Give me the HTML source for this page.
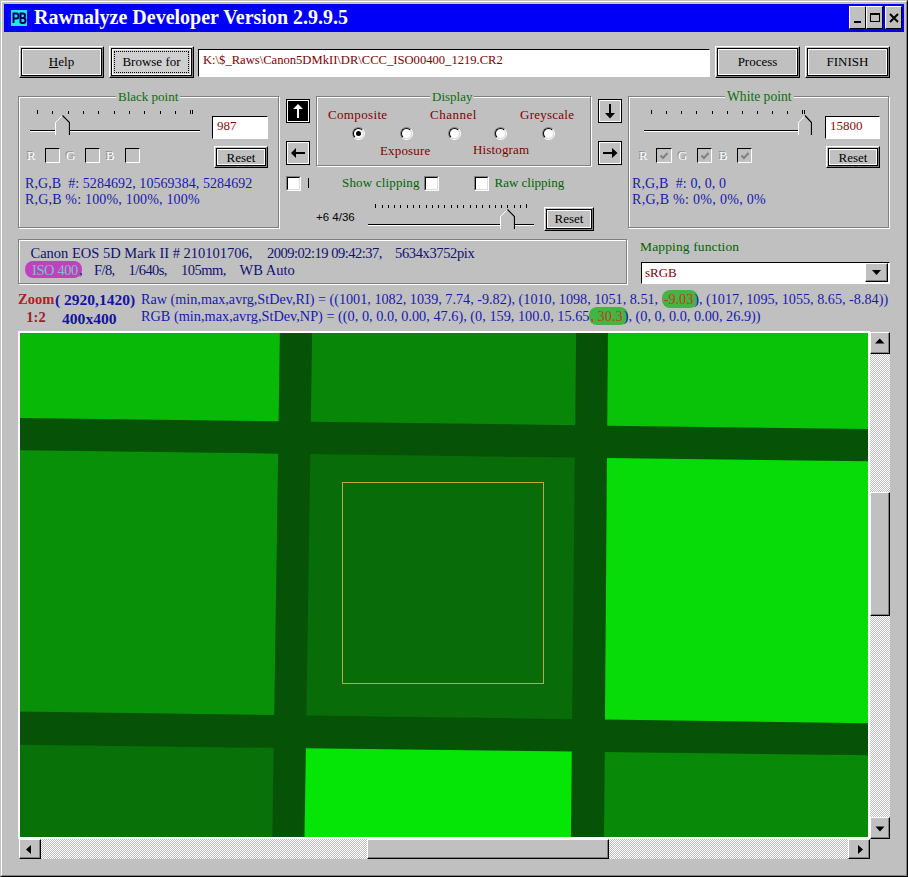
<!DOCTYPE html>
<html><head><meta charset="utf-8">
<style>
*{margin:0;padding:0;box-sizing:border-box}
html,body{width:908px;height:877px;overflow:hidden;background:#c0c0c0}
body{position:relative;font-family:"Liberation Serif",serif;font-size:13px;color:#000}
.a{position:absolute}
.t{position:absolute;white-space:pre;line-height:1}
.cbtn{position:absolute;top:6px;height:23px;width:17px;background:#c0c0c0;border-top:1px solid #fff;border-left:1px solid #fff;border-right:1px solid #000;border-bottom:1px solid #000}
.btn{position:absolute;background:#c0c0c0;border-top:1px solid #fff;border-left:1px solid #fff;border-right:1px solid #000;border-bottom:1px solid #000}
.btn>.i1{position:absolute;left:0;top:0;right:0;bottom:0;border-right:1px solid #808080;border-bottom:1px solid #808080}
.btn>.i2{position:absolute;left:1px;top:1px;right:1px;bottom:1px;border:1px solid #000}
.btn>.i3{position:absolute;left:2px;top:2px;right:2px;bottom:2px;border:1px solid #fff}
.btn .lbl{position:absolute;left:0;right:0;text-align:center;white-space:pre;line-height:1}
.glbl{position:absolute;background:#c0c0c0;color:#0a6e0a;white-space:pre;line-height:1;padding:0 2px}
.chk{position:absolute;border-top:1px solid #808080;border-left:1px solid #808080;border-right:1px solid #fff;border-bottom:1px solid #fff}
.chk>div{position:absolute;left:0;top:0;right:0;bottom:0;border-top:1px solid #000;border-left:1px solid #000;border-right:1px solid #dcdcdc;border-bottom:1px solid #dcdcdc}
.radio{position:absolute;width:13px;height:13px;border-radius:50%;border:1px solid;border-color:#808080 #fff #fff #808080}
.radio>div{position:absolute;left:0;top:0;right:0;bottom:0;border-radius:50%;border:1px solid;border-color:#000 #dcdcdc #dcdcdc #000;background:#fff}
.tick{position:absolute;width:1px;background:#000}
.sb{position:absolute;background:#c0c0c0;border-top:1px solid #fff;border-left:1px solid #fff;border-right:1px solid #000;border-bottom:1px solid #000}
.sb>div{position:absolute;left:0;top:0;right:0;bottom:0;border-right:1px solid #808080;border-bottom:1px solid #808080}
.track{position:absolute;background-color:#e0e0e0;background-image:repeating-conic-gradient(#c0c0c0 0% 25%,#ffffff 0% 50%);background-size:2px 2px}
.nav{position:absolute;width:24px;height:24px;border:1px solid #000}
.nav>div{position:absolute;left:0;top:0;right:0;bottom:0;border:1px solid #fff}
</style></head><body>

<div class="a" style="left:0px;top:0px;width:908px;height:877px;border-top:1px solid #c0c0c0;border-left:1px solid #c0c0c0;border-right:1px solid #000;border-bottom:1px solid #000"></div>
<div class="a" style="left:1px;top:1px;width:906px;height:875px;border-top:1px solid #fff;border-left:1px solid #fff;border-right:1px solid #808080;border-bottom:1px solid #808080"></div>
<div class="a" style="left:4px;top:4px;width:900px;height:28px;background:#0000f8"></div>
<div class="a" style="left:11px;top:10px;width:16px;height:16px;background:#22e4f4"></div>
<svg class="a" style="left:11px;top:10px" width="16" height="16"><path d="M2.5 13V3.5H5.5Q7.5 3.5 7.5 6Q7.5 8.5 5.5 8.5H2.5" stroke="#000050" stroke-width="2" fill="none"/><path d="M9.5 13V3.5H12Q14 3.5 14 5.5Q14 8 12 8H9.5M12 8Q14.5 8 14.5 10.5Q14.5 13 12 13H9.5" stroke="#000050" stroke-width="2" fill="none"/></svg>
<div class="t" style="left:34px;top:6.75px;font-size:20px;color:#fff;font-weight:bold;">Rawnalyze Developer Version 2.9.9.5</div>
<div class="cbtn" style="left:849px"><div class="a" style="left:4px;top:14px;width:7px;height:2px;background:#000"></div></div>
<div class="cbtn" style="left:866px"><div class="a" style="left:3px;top:6px;width:10px;height:9px;border:1px solid #000;border-top-width:2px"></div></div>
<div class="cbtn" style="left:885px"><svg class="a" style="left:3px;top:6px" width="10" height="10"><path d="M1 1L9 9M9 1L1 9" stroke="#000" stroke-width="2"/></svg></div>
<div class="btn" style="left:19px;top:46px;width:85px;height:32px;"><div class="i1"></div><div class="i2"></div><div class="i3"></div>
<div class="lbl" style="top:7.91px;font-size:13px"><u>H</u>elp</div></div>
<div class="btn" style="left:109px;top:46px;width:85px;height:32px;background-color:#cfcfcf;"><div class="i1"></div><div class="i2"></div><div class="i3"></div>
<div class="a" style="left:4px;top:4px;right:4px;bottom:4px;border:1px dotted #000"></div>
<div class="lbl" style="top:7.91px;font-size:13px">Browse for</div></div>
<div class="a" style="left:198px;top:49px;width:512px;height:28px;background:#fff;border-top:1px solid #000;border-left:1px solid #000;border-right:1px solid #fff;border-bottom:1px solid #fff"></div>
<div class="t" style="left:203px;top:54.25px;font-size:12.6px;color:#800000;">K:\$_Raws\Canon5DMkII\DR\CCC_ISO00400_1219.CR2</div>
<div class="btn" style="left:715px;top:46px;width:85px;height:32px;"><div class="i1"></div><div class="i2"></div><div class="i3"></div>
<div class="lbl" style="top:7.91px;font-size:13px">Process</div></div>
<div class="btn" style="left:805px;top:46px;width:85px;height:32px;"><div class="i1"></div><div class="i2"></div><div class="i3"></div>
<div class="lbl" style="top:7.91px;font-size:13px">FINISH</div></div>
<div class="a" style="left:19px;top:97px;width:261px;height:132px;border:1px solid #fff"></div>
<div class="a" style="left:18px;top:96px;width:261px;height:132px;border:1px solid #808080;border-right-color:#808080"></div>
<div class="glbl" style="left:116px;top:89.5px;font-size:13px">Black point</div>
<div class="a" style="left:317px;top:97px;width:275px;height:70px;border:1px solid #fff"></div>
<div class="a" style="left:316px;top:96px;width:275px;height:70px;border:1px solid #808080;border-right-color:#808080"></div>
<div class="glbl" style="left:430px;top:89.5px;font-size:13px">Display</div>
<div class="a" style="left:629px;top:97px;width:261px;height:132px;border:1px solid #fff"></div>
<div class="a" style="left:628px;top:96px;width:261px;height:132px;border:1px solid #808080;border-right-color:#808080"></div>
<div class="glbl" style="left:725px;top:89.5px;font-size:13.6px">White point</div>
<div class="tick" style="left:37px;top:111px;height:3px"></div>
<div class="tick" style="left:52px;top:111px;height:3px"></div>
<div class="tick" style="left:68px;top:111px;height:3px"></div>
<div class="tick" style="left:83px;top:111px;height:3px"></div>
<div class="tick" style="left:98px;top:111px;height:3px"></div>
<div class="tick" style="left:114px;top:111px;height:3px"></div>
<div class="tick" style="left:129px;top:111px;height:3px"></div>
<div class="tick" style="left:144px;top:111px;height:3px"></div>
<div class="tick" style="left:160px;top:111px;height:3px"></div>
<div class="tick" style="left:175px;top:111px;height:3px"></div>
<div class="tick" style="left:37px;top:110px;height:4px"></div>
<div class="tick" style="left:190px;top:110px;height:4px"></div>
<div class="tick" style="left:192px;top:110px;height:4px"></div>
<div class="a" style="left:30px;top:130px;width:170px;height:1px;background:#000"></div>
<div class="a" style="left:30px;top:131px;width:170px;height:1px;background:#fff"></div>
<svg class="a" style="left:55px;top:115px" width="15" height="20"><path d="M0.5 20 L0.5 7.5 L7.5 0.5 L7.5 0.5" stroke="none" fill="#c0c0c0"/><polygon points="0,20 0,7 7.5,0 15,7 15,20" fill="#c0c0c0"/><path d="M0.5 20 L0.5 7.5 L7.5 0.5" stroke="#fff" fill="none" stroke-width="1"/><path d="M7.5 0.5 L14.5 7.5 L14.5 20" stroke="#000" fill="none" stroke-width="1.2"/></svg>
<div class="a" style="left:212px;top:116px;width:56px;height:23px;background:#fff;border-top:1px solid #000;border-left:1px solid #000;border-right:1px solid #fff;border-bottom:1px solid #fff"></div>
<div class="t" style="left:217px;top:119.11px;font-size:13px;color:#8a0a0a;">987</div>
<div class="btn" style="left:214px;top:146px;width:54px;height:22px;"><div class="i1"></div><div class="i2"></div><div class="i3"></div>
<div class="lbl" style="top:4.11px;font-size:13px">Reset</div></div>
<div class="t" style="left:27px;top:149.11px;font-size:13px;color:#fff;text-shadow:-1px -1px 0 #8a8a8a">R</div>
<div class="a" style="left:45px;top:148px;width:15px;height:15px;border-top:1px solid #000;border-left:1px solid #000;border-right:1px solid #fff;border-bottom:1px solid #fff;background:#c0c0c0"></div>
<div class="t" style="left:66px;top:149.11px;font-size:13px;color:#fff;text-shadow:-1px -1px 0 #8a8a8a">G</div>
<div class="a" style="left:85px;top:148px;width:15px;height:15px;border-top:1px solid #000;border-left:1px solid #000;border-right:1px solid #fff;border-bottom:1px solid #fff;background:#c0c0c0"></div>
<div class="t" style="left:106px;top:149.11px;font-size:13px;color:#fff;text-shadow:-1px -1px 0 #8a8a8a">B</div>
<div class="a" style="left:125px;top:148px;width:15px;height:15px;border-top:1px solid #000;border-left:1px solid #000;border-right:1px solid #fff;border-bottom:1px solid #fff;background:#c0c0c0"></div>
<div class="t" style="left:25px;top:177.28px;font-size:14px;color:#1818b0;letter-spacing:0.06px">R,G,B  #: 5284692, 10569384, 5284692</div>
<div class="t" style="left:25px;top:193.28px;font-size:14px;color:#1818b0;letter-spacing:0.18px">R,G,B %: 100%, 100%, 100%</div>
<div class="tick" style="left:651px;top:111px;height:3px"></div>
<div class="tick" style="left:666px;top:111px;height:3px"></div>
<div class="tick" style="left:681px;top:111px;height:3px"></div>
<div class="tick" style="left:696px;top:111px;height:3px"></div>
<div class="tick" style="left:712px;top:111px;height:3px"></div>
<div class="tick" style="left:727px;top:111px;height:3px"></div>
<div class="tick" style="left:742px;top:111px;height:3px"></div>
<div class="tick" style="left:757px;top:111px;height:3px"></div>
<div class="tick" style="left:772px;top:111px;height:3px"></div>
<div class="tick" style="left:787px;top:111px;height:3px"></div>
<div class="tick" style="left:651px;top:110px;height:4px"></div>
<div class="tick" style="left:802px;top:110px;height:4px"></div>
<div class="tick" style="left:804px;top:110px;height:4px"></div>
<div class="a" style="left:644px;top:130px;width:155px;height:1px;background:#000"></div>
<div class="a" style="left:644px;top:131px;width:155px;height:1px;background:#fff"></div>
<svg class="a" style="left:798px;top:115px" width="14" height="20"><path d="M0.5 20 L0.5 7.5 L7.0 0.5 L7.0 0.5" stroke="none" fill="#c0c0c0"/><polygon points="0,20 0,7 7.0,0 14,7 14,20" fill="#c0c0c0"/><path d="M0.5 20 L0.5 7.5 L7.0 0.5" stroke="#fff" fill="none" stroke-width="1"/><path d="M7.0 0.5 L13.5 7.5 L13.5 20" stroke="#000" fill="none" stroke-width="1.2"/></svg>
<div class="a" style="left:825px;top:116px;width:55px;height:23px;background:#fff;border-top:1px solid #000;border-left:1px solid #000;border-right:1px solid #fff;border-bottom:1px solid #fff"></div>
<div class="t" style="left:830px;top:119.11px;font-size:13px;color:#8a0a0a;">15800</div>
<div class="btn" style="left:826px;top:146px;width:54px;height:22px;"><div class="i1"></div><div class="i2"></div><div class="i3"></div>
<div class="lbl" style="top:4.11px;font-size:13px">Reset</div></div>
<div class="t" style="left:639px;top:149.11px;font-size:13px;color:#fff;text-shadow:-1px -1px 0 #8a8a8a">R</div>
<div class="a" style="left:656px;top:148px;width:16px;height:15px;border-top:1px solid #000;border-left:1px solid #000;border-right:1px solid #fff;border-bottom:1px solid #fff;background:#c0c0c0"></div>
<svg class="a" style="left:659px;top:151px" width="10" height="10"><path d="M1.5 4.5 L4 7 L8.5 2" stroke="#808080" stroke-width="2" fill="none"/></svg>
<div class="t" style="left:678px;top:149.11px;font-size:13px;color:#fff;text-shadow:-1px -1px 0 #8a8a8a">G</div>
<div class="a" style="left:697px;top:148px;width:15px;height:15px;border-top:1px solid #000;border-left:1px solid #000;border-right:1px solid #fff;border-bottom:1px solid #fff;background:#c0c0c0"></div>
<svg class="a" style="left:700px;top:151px" width="10" height="10"><path d="M1.5 4.5 L4 7 L8.5 2" stroke="#808080" stroke-width="2" fill="none"/></svg>
<div class="t" style="left:719px;top:149.11px;font-size:13px;color:#fff;text-shadow:-1px -1px 0 #8a8a8a">B</div>
<div class="a" style="left:737px;top:148px;width:15px;height:15px;border-top:1px solid #000;border-left:1px solid #000;border-right:1px solid #fff;border-bottom:1px solid #fff;background:#c0c0c0"></div>
<svg class="a" style="left:740px;top:151px" width="10" height="10"><path d="M1.5 4.5 L4 7 L8.5 2" stroke="#808080" stroke-width="2" fill="none"/></svg>
<div class="t" style="left:632px;top:177.28px;font-size:14px;color:#1818b0;letter-spacing:0.12px">R,G,B  #: 0, 0, 0</div>
<div class="t" style="left:632px;top:193.28px;font-size:14px;color:#1818b0;letter-spacing:0.3px">R,G,B %: 0%, 0%, 0%</div>
<div class="nav" style="left:286px;top:99px;background:#000"><div></div><svg class="a" style="left:1px;top:1px" width="22" height="22"><path d="M9 17V8H5L10 3L15 8H11V17Z" fill="#fff"/></svg></div>
<div class="nav" style="left:286px;top:141px;background:#c0c0c0"><div></div><svg class="a" style="left:1px;top:1px" width="22" height="22"><path d="M3 10L8 5V9H17V11H8V15Z" fill="#000"/></svg></div>
<div class="nav" style="left:598px;top:99px;background:#c0c0c0"><div></div><svg class="a" style="left:1px;top:1px" width="22" height="22"><path d="M9 3H11V12H15L10 17.5L5 12H9Z" fill="#000"/></svg></div>
<div class="nav" style="left:598px;top:141px;background:#c0c0c0"><div></div><svg class="a" style="left:1px;top:1px" width="22" height="22"><path d="M17.5 10L12 5V9H3V11H12V15Z" fill="#000"/></svg></div>
<div class="t" style="left:328px;top:107.51px;font-size:13px;color:#800000;letter-spacing:0.35px">Composite</div>
<div class="t" style="left:430px;top:108.11px;font-size:13px;color:#800000;letter-spacing:0.5px">Channel</div>
<div class="t" style="left:520px;top:108.11px;font-size:13px;color:#800000;letter-spacing:0.25px">Greyscale</div>
<div class="radio" style="left:352px;top:127px"><div></div></div>
<div class="a" style="left:356px;top:131px;width:5px;height:5px;border-radius:50%;background:#000"></div>
<div class="radio" style="left:400px;top:127px"><div></div></div>
<div class="radio" style="left:448px;top:127px"><div></div></div>
<div class="radio" style="left:494px;top:127px"><div></div></div>
<div class="radio" style="left:542px;top:127px"><div></div></div>
<div class="t" style="left:380px;top:144.11px;font-size:13px;color:#800000;letter-spacing:0.15px">Exposure</div>
<div class="t" style="left:473px;top:142.61px;font-size:13px;color:#800000;letter-spacing:0.15px">Histogram</div>
<div class="chk" style="left:286px;top:176px;width:15px;height:15px"><div style="background:#fff"></div></div>
<div class="a" style="left:308px;top:178px;width:1px;height:10px;background:#000"></div>
<div class="t" style="left:342px;top:176.11px;font-size:13px;color:#006400;letter-spacing:0.17px">Show clipping</div>
<div class="chk" style="left:424px;top:176px;width:15px;height:15px"><div style="background:#fff"></div></div>
<div class="chk" style="left:474px;top:176px;width:15px;height:15px"><div style="background:#fff"></div></div>
<div class="t" style="left:494.5px;top:176.11px;font-size:13px;color:#006400;">Raw clipping</div>
<div class="t" style="left:316px;top:212.27px;font-size:11.5px;color:#000;font-family:'Liberation Sans',sans-serif;">+6 4/36</div>
<div class="tick" style="left:382px;top:205px;height:3px"></div>
<div class="tick" style="left:388px;top:205px;height:3px"></div>
<div class="tick" style="left:394px;top:205px;height:3px"></div>
<div class="tick" style="left:400px;top:205px;height:3px"></div>
<div class="tick" style="left:407px;top:205px;height:3px"></div>
<div class="tick" style="left:413px;top:205px;height:3px"></div>
<div class="tick" style="left:419px;top:205px;height:3px"></div>
<div class="tick" style="left:426px;top:205px;height:3px"></div>
<div class="tick" style="left:432px;top:205px;height:3px"></div>
<div class="tick" style="left:438px;top:205px;height:3px"></div>
<div class="tick" style="left:444px;top:205px;height:3px"></div>
<div class="tick" style="left:451px;top:205px;height:3px"></div>
<div class="tick" style="left:457px;top:205px;height:3px"></div>
<div class="tick" style="left:463px;top:205px;height:3px"></div>
<div class="tick" style="left:470px;top:205px;height:3px"></div>
<div class="tick" style="left:476px;top:205px;height:3px"></div>
<div class="tick" style="left:482px;top:205px;height:3px"></div>
<div class="tick" style="left:489px;top:205px;height:3px"></div>
<div class="tick" style="left:495px;top:205px;height:3px"></div>
<div class="tick" style="left:501px;top:205px;height:3px"></div>
<div class="tick" style="left:507px;top:205px;height:3px"></div>
<div class="tick" style="left:514px;top:205px;height:3px"></div>
<div class="tick" style="left:520px;top:205px;height:3px"></div>
<div class="tick" style="left:375px;top:204px;height:4px"></div>
<div class="tick" style="left:526px;top:204px;height:4px"></div>
<div class="a" style="left:368px;top:224px;width:166px;height:1px;background:#000"></div>
<div class="a" style="left:368px;top:225px;width:166px;height:1px;background:#fff"></div>
<svg class="a" style="left:500px;top:209px" width="15" height="20"><path d="M0.5 20 L0.5 7.5 L7.5 0.5 L7.5 0.5" stroke="none" fill="#c0c0c0"/><polygon points="0,20 0,7 7.5,0 15,7 15,20" fill="#c0c0c0"/><path d="M0.5 20 L0.5 7.5 L7.5 0.5" stroke="#fff" fill="none" stroke-width="1"/><path d="M7.5 0.5 L14.5 7.5 L14.5 20" stroke="#000" fill="none" stroke-width="1.2"/></svg>
<div class="btn" style="left:544px;top:207px;width:50px;height:24px;"><div class="i1"></div><div class="i2"></div><div class="i3"></div>
<div class="lbl" style="top:4.41px;font-size:13px">Reset</div></div>
<div class="a" style="left:19px;top:240px;width:609px;height:45px;border:1px solid #fff"></div>
<div class="a" style="left:18px;top:239px;width:609px;height:45px;border:1px solid #808080;border-right-color:#808080"></div>
<div class="t" style="left:30.5px;top:246.36px;font-size:14.5px;color:#101070;">Canon EOS 5D Mark II # 210101706,</div>
<div class="t" style="left:267px;top:246.36px;font-size:14.5px;color:#101070;letter-spacing:-0.5px">2009:02:19 09:42:37,</div>
<div class="t" style="left:395px;top:246.36px;font-size:14.5px;color:#101070;letter-spacing:-0.37px">5634x3752pix</div>
<div class="a" style="left:25px;top:261px;width:57px;height:17px;background:#c040c0;border-radius:8px"></div>
<div class="t" style="left:32px;top:262.86px;font-size:14.5px;color:#78c4c4;letter-spacing:-0.4px">ISO 400</div>
<div class="t" style="left:79px;top:262.86px;font-size:14.5px;color:#101070;">,</div>
<div class="t" style="left:94px;top:262.86px;font-size:14.5px;color:#101070;letter-spacing:-0.6px">F/8,</div>
<div class="t" style="left:128.5px;top:262.86px;font-size:14.5px;color:#101070;letter-spacing:-0.55px">1/640s,</div>
<div class="t" style="left:181px;top:262.86px;font-size:14.5px;color:#101070;letter-spacing:-0.5px">105mm,</div>
<div class="t" style="left:239.5px;top:262.86px;font-size:14.5px;color:#101070;">WB Auto</div>
<div class="t" style="left:640px;top:239.69px;font-size:13.5px;color:#006400;letter-spacing:0.13px">Mapping function</div>
<div class="a" style="left:641px;top:262px;width:249px;height:22px;background:#fff;border-top:1px solid #000;border-left:1px solid #000;border-right:1px solid #fff;border-bottom:1px solid #fff"></div>
<div class="t" style="left:645px;top:266.11px;font-size:13px;color:#800000;">sRGB</div>
<div class="sb" style="left:865px;top:263px;width:23px;height:19px"><div></div><svg class="a" style="left:6px;top:6px" width="10" height="6"><path d="M0 0H9L4.5 5Z" fill="#000"/></svg></div>
<div class="t" style="left:18px;top:292.36px;font-size:14.5px;color:#b02020;font-weight:bold;">Zoom</div>
<div class="t" style="left:55px;top:292.32px;font-size:15.5px;color:#1414a0;font-weight:bold;">( 2920,1420)</div>
<div class="t" style="left:26.3px;top:309.86px;font-size:14.5px;color:#a02020;font-weight:bold;">1:2</div>
<div class="t" style="left:62px;top:311.13px;font-size:15.6px;color:#1414a0;font-weight:bold;">400x400</div>
<div class="t" style="left:141px;top:291.71px;font-size:14.2px;color:#1818b0;">Raw (min,max,avrg,StDev,RI) = ((1001, 1082, 1039, 7.74, -9.82), (1010, 1098, 1051, 8.51, <span style="background:#44b444;border-radius:8px;color:#c04020;padding:1px 5px 1px 2px;margin-right:-4px">-9.03</span>), (1017, 1095, 1055, 8.65, -8.84))</div>
<div class="t" style="left:141px;top:309.22px;font-size:14.3px;color:#1818b0;">RGB (min,max,avrg,StDev,NP) = ((0, 0, 0.0, 0.00, 47.6), (0, 159, 100.0, 15.65<span style="background:#44b444;border-radius:8px;color:#c04020;padding:1px 5px 1px 1px;margin-right:-4px">, 30.3</span>), (0, 0, 0.0, 0.00, 26.9))</div>
<div class="a" style="left:18px;top:331px;width:852px;height:508px;background:#fff"></div>
<div class="a" style="left:20px;top:333px;width:848px;height:504px;overflow:hidden"><svg class="a" style="left:-20px;top:-333px" width="908" height="877">
<rect x="20" y="333" width="848" height="504" fill="rgb(6,82,6)"/>
<polygon points="15.00,328.00 279.98,328.00 278.58,421.36 15.00,417.94" fill="rgb(8,185,8)"/>
<polygon points="312.18,328.00 576.22,328.00 575.21,425.22 310.77,421.78" fill="rgb(8,134,8)"/>
<polygon points="607.99,328.00 873.00,328.00 873.00,429.09 607.24,425.63" fill="rgb(8,195,8)"/>
<polygon points="15.00,450.24 278.10,453.66 274.18,714.96 15.00,711.33" fill="rgb(8,145,8)"/>
<polygon points="310.29,454.07 574.88,457.51 572.16,719.13 306.37,715.41" fill="rgb(8,108,8)"/>
<polygon points="606.99,457.93 873.00,461.39 873.00,723.34 604.98,719.59" fill="rgb(8,220,8)"/>
<polygon points="15.00,744.64 273.68,747.87 272.27,842.00 15.00,842.00" fill="rgb(8,114,8)"/>
<polygon points="305.88,748.27 571.82,751.60 570.88,842.00 304.47,842.00" fill="rgb(6,230,6)"/>
<polygon points="604.73,752.01 873.00,755.36 873.00,842.00 604.03,842.00" fill="rgb(8,138,8)"/>
</svg></div>
<div class="a" style="left:18px;top:331px;width:852px;height:2px;background:#fff"></div>
<div class="a" style="left:18px;top:331px;width:2px;height:508px;background:#fff"></div>
<div class="a" style="left:868px;top:331px;width:2px;height:508px;background:#fff"></div>
<div class="a" style="left:18px;top:837px;width:852px;height:2px;background:#fff"></div>
<div class="a" style="left:342px;top:482px;width:202px;height:202px;border:1px solid #d0a040"></div>
<div class="track" style="left:870px;top:332px;width:20px;height:507px"></div>
<div class="track" style="left:19px;top:839px;width:851px;height:20px"></div>
<div class="sb" style="left:870px;top:332px;width:20px;height:22px"><div></div><svg class="a" style="left:0;top:0" width="20" height="22"><path d="M4 10.5H13.5L8.75 5.5Z" fill="#000"/></svg></div>
<div class="sb" style="left:870px;top:817px;width:20px;height:22px"><div></div><svg class="a" style="left:0;top:0" width="20" height="22"><path d="M4.5 8.5H13.5L9 13.5Z" fill="#000"/></svg></div>
<div class="sb" style="left:870px;top:492px;width:20px;height:124px"><div></div></div>
<div class="sb" style="left:19px;top:839px;width:22px;height:20px"><div></div><svg class="a" style="left:0;top:0" width="22" height="20"><path d="M11 5L6 9.5L11 14Z" fill="#000"/></svg></div>
<div class="sb" style="left:848px;top:839px;width:22px;height:20px"><div></div><svg class="a" style="left:0;top:0" width="22" height="20"><path d="M9 5L14 9.5L9 14Z" fill="#000"/></svg></div>
<div class="sb" style="left:367px;top:839px;width:242px;height:20px"><div></div></div>
</body></html>
